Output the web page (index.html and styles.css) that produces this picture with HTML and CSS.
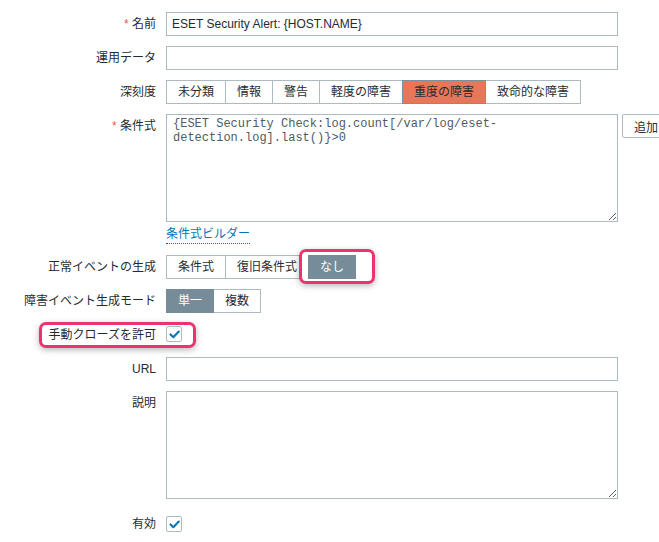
FILE: index.html
```html
<!DOCTYPE html>
<html lang="ja">
<head>
<meta charset="utf-8">
<title>Trigger</title>
<link rel="stylesheet" href="styles.css">
</head>
<body>
<div class="page">
  <form class="form">
    <div class="lbl"><span class="req">*</span> 名前</div>
    <div class="fld"><input class="txt" type="text" value="ESET Security Alert: {HOST.NAME}"></div>

    <div class="lbl">運用データ</div>
    <div class="fld"><input class="txt" type="text" value=""></div>

    <div class="lbl">深刻度</div>
    <div class="fld">
      <div class="seg">
        <span class="seg-item">未分類</span>
        <span class="seg-item">情報</span>
        <span class="seg-item">警告</span>
        <span class="seg-item">軽度の障害</span>
        <span class="seg-item seg-high">重度の障害</span>
        <span class="seg-item">致命的な障害</span>
      </div>
    </div>

    <div class="lbl"><span class="req">*</span> 条件式</div>
    <div class="fld">
      <div class="expr-row">
        <textarea class="area code">{ESET Security Check:log.count[/var/log/eset-detection.log].last()}&gt;0</textarea>
        <button type="button" class="btn">追加</button>
      </div>
      <div class="builder"><a class="link">条件式ビルダー</a></div>
    </div>

    <div class="lbl">正常イベントの生成</div>
    <div class="fld">
      <div class="seg seg-rel">
        <span class="seg-item">条件式</span>
        <span class="seg-item">復旧条件式</span>
        <span class="seg-item seg-on seg-top">なし</span>
        <span class="mark mark-a"></span>
      </div>
    </div>

    <div class="lbl">障害イベント生成モード</div>
    <div class="fld">
      <div class="seg">
        <span class="seg-item seg-on">単一</span>
        <span class="seg-item">複数</span>
      </div>
    </div>

    <div class="lbl">手動クローズを許可</div>
    <div class="fld fld-top"><span class="chk"><svg viewBox="0 0 15 15" width="15" height="15"><path d="M3.5 7.5 L6.3 10.2 L11.8 4.6" fill="none" stroke="#0a78b8" stroke-width="2.2" stroke-linecap="round" stroke-linejoin="round"/></svg></span></div>

    <div class="lbl">URL</div>
    <div class="fld"><input class="txt" type="text" value=""></div>

    <div class="lbl">説明</div>
    <div class="fld"><textarea class="area"></textarea></div>

    <div class="lbl lbl-last">有効</div>
    <div class="fld fld-last"><span class="chk"><svg viewBox="0 0 15 15" width="15" height="15"><path d="M3.5 7.5 L6.3 10.2 L11.8 4.6" fill="none" stroke="#0a78b8" stroke-width="2.2" stroke-linecap="round" stroke-linejoin="round"/></svg></span></div>

    <span class="mark mark-b"></span>
  </form>
</div>
</body>
</html>
```

FILE: styles.css
```css
html, body {
  margin: 0;
  padding: 0;
  background: #fff;
}
.page {
  width: 659px;
  height: 542px;
  overflow: hidden;
  font-family: "Liberation Sans", "Noto Sans CJK JP", sans-serif;
  font-size: 12px;
  color: #1f2c33;
}
.form {
  position: relative;
  display: grid;
  grid-template-columns: 156px 480px;
  column-gap: 10px;
  row-gap: 10px;
  padding-top: 12px;
  margin: 0;
}
.lbl {
  text-align: right;
  line-height: 24px;
  white-space: nowrap;
  position: relative;
  z-index: 3;
}
.req {
  color: #e45959;
}
.fld {
  min-height: 24px;
}
.txt {
  display: block;
  box-sizing: border-box;
  width: 452px;
  height: 24px;
  margin: 0;
  border: 1px solid #acbbc2;
  padding: 0 5px;
  font-family: "Liberation Sans", "Noto Sans CJK JP", sans-serif;
  font-size: 12px;
  color: #1f2c33;
  outline: none;
}
.seg {
  display: flex;
}
.seg-rel {
  position: relative;
}
.seg-item {
  box-sizing: border-box;
  height: 24px;
  line-height: 22px;
  padding: 0 11px;
  border: 1px solid #acbbc2;
  margin-left: -1px;
  background: #fff;
  white-space: nowrap;
}
.seg-item:first-child {
  margin-left: 0;
}
.seg-high {
  background: #e97659;
  border-color: #7d909b;
  position: relative;
  z-index: 1;
}
.seg-on {
  background: #768d99;
  border-color: #768d99;
  color: #fff;
  position: relative;
  z-index: 1;
}
.seg-top {
  z-index: 4;
}
.expr-row {
  display: flex;
  align-items: flex-start;
  gap: 4px;
}
.area {
  display: block;
  box-sizing: border-box;
  width: 452px;
  height: 108px;
  margin: 0;
  border: 1px solid #acbbc2;
  padding: 3px 6px;
  font-family: "Liberation Sans", "Noto Sans CJK JP", sans-serif;
  font-size: 12px;
  color: #1f2c33;
  resize: both;
  outline: none;
  flex: none;
}
.code {
  font-family: "Liberation Mono", monospace;
  line-height: 14px;
  padding: 2px 6px;
  color: #4f5b62;
}
.btn {
  flex: none;
  box-sizing: border-box;
  height: 24px;
  padding: 0 11px;
  border: 1px solid #acbbc2;
  border-radius: 2px;
  background: #fff;
  font-family: "Liberation Sans", "Noto Sans CJK JP", sans-serif;
  font-size: 12px;
  color: #1f2c33;
  width: 60px;
  text-align: left;
}
.builder {
  height: 23px;
  padding-top: 4px;
  box-sizing: border-box;
}
.link {
  display: inline-block;
  color: #0275b8;
  line-height: 17px;
  border-bottom: 1px dotted #0275b8;
  cursor: pointer;
}
.chk {
  display: block;
  box-sizing: border-box;
  width: 16px;
  height: 16px;
  margin-top: 4px;
  border: 1px solid #acbbc2;
  border-radius: 2px;
  background: #fff;
  position: relative;
  z-index: 3;
}
.chk svg {
  display: block;
  margin: -0.5px;
}
.fld-top .chk {
  margin-top: 3px;
}
.lbl-last, .fld-last {
  margin-top: 3px;
}
.mark {
  position: absolute;
  box-sizing: border-box;
  border: 3px solid #ea3370;
  border-radius: 7px;
  background: #fff;
  box-shadow: 0 2px 6px rgba(0, 0, 0, 0.28);
}
.mark-a {
  left: 133px;
  top: -6px;
  width: 76px;
  height: 35px;
  z-index: 2;
}
.mark-b {
  left: 39px;
  top: 322px;
  width: 157px;
  height: 26px;
  z-index: 2;
}
```
